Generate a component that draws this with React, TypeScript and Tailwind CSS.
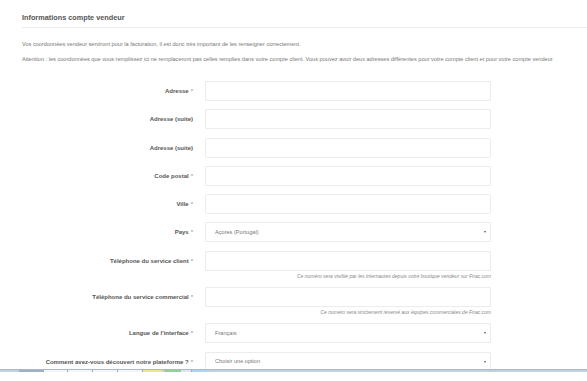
import React from 'react';

type Field = {
  label: string;
  required?: boolean;
  select?: string;
  hint?: string;
};

const fields: Field[] = [
  { label: 'Adresse', required: true },
  { label: 'Adresse (suite)' },
  { label: 'Adresse (suite)' },
  { label: 'Code postal', required: true },
  { label: 'Ville', required: true },
  { label: 'Pays', required: true, select: 'Açores (Portugal)' },
  {
    label: 'Téléphone du service client',
    required: true,
    hint: 'Ce numéro sera visible par les internautes depuis votre boutique vendeur sur Fnac.com',
  },
  {
    label: 'Téléphone du service commercial',
    required: true,
    hint: 'Ce numéro sera strictement réservé aux équipes commerciales de Fnac.com',
  },
  { label: "Langue de l'interface", required: true, select: 'Français' },
  { label: 'Comment avez-vous découvert notre plateforme ?', required: true, select: 'Choisir une option' },
];

function FieldRow({ field }: { field: Field }) {
  return (
    <div className="flex items-start">
      <label className="w-[171px] h-[20px] flex items-center justify-end text-[6px] font-bold text-[#555] leading-none whitespace-nowrap">
        {field.label}
        {field.required && <span className="font-normal text-[#888] ml-[2px]">*</span>}
      </label>
      <div className="ml-[12px] w-[286px]">
        {field.select ? (
          <div className="h-[20px] border border-[#ececec] rounded-[1px] flex items-center justify-between pl-[9px] pr-[4px]">
            <span className="text-[5.6px] text-[#777] leading-none">{field.select}</span>
            <span className="w-0 h-0 border-l-[1.5px] border-r-[1.5px] border-t-[2.5px] border-l-transparent border-r-transparent border-t-[#555]" />
          </div>
        ) : (
          <div className="h-[20px] border border-[#ececec] rounded-[1px]" />
        )}
        {field.hint && (
          <p className="mt-[3px] text-right text-[5px] italic text-[#888] leading-[5px] whitespace-nowrap">{field.hint}</p>
        )}
      </div>
    </div>
  );
}

export default function App() {
  return (
    <div className="w-[587px] h-[381px] overflow-hidden bg-white font-['Liberation_Sans',Arial,sans-serif]">
      <div className="h-[369px] overflow-hidden pl-[22px] pt-[14px]">
        <h2 className="text-[7.3px] font-bold text-[#555] leading-[8px] pb-[5px] border-b border-[#ededed]">
          Informations compte vendeur
        </h2>
        <p className="mt-[13px] text-[5.6px] text-[#777] leading-[6px] whitespace-nowrap">
          Vos coordonnées vendeur serviront pour la facturation, il est donc très important de les renseigner correctement.
        </p>
        <p className="mt-[9px] text-[5.6px] text-[#777] leading-[6px] whitespace-nowrap">
          Attention : les coordonnées que vous remplissez ici ne remplaceront pas celles remplies dans votre compte client. Vous pouvez avoir deux adresses différentes pour votre compte client et pour votre compte vendeur.
        </p>
        <div className="mt-[19px] flex flex-col gap-[8.3px]">
          {fields.map((f, i) => (
            <FieldRow key={i} field={f} />
          ))}
        </div>
      </div>
      <div className="h-[3px] bg-[#c4d0de] border-t border-[#a9b8cb] flex pl-[19px]">
        <div className="w-[24px] bg-[#9fb0c6]" />
        <div className="w-[24px] bg-[#f4f6f9] border-l border-[#9aaabf]" />
        <div className="w-[25px] bg-[#f4f6f9] border-l border-[#9aaabf]" />
        <div className="w-[25px] bg-[#f4f6f9] border-l border-[#9aaabf]" />
        <div className="w-[25px] bg-[#f4f6f9] border-l border-[#9aaabf]" />
        <div className="w-[20px] bg-[#f2e58c] border-l border-[#9aaabf]" />
        <div className="w-[3px] bg-[#c4d0de]" />
        <div className="w-[16px] bg-[#8fd39a] border-l border-[#9aaabf]" />
        <div className="w-[10px] bg-[#dfe6ee]" />
        <div className="w-[18px] bg-[#a9d6f2] border-l border-[#9aaabf]" />
      </div>
    </div>
  );
}
